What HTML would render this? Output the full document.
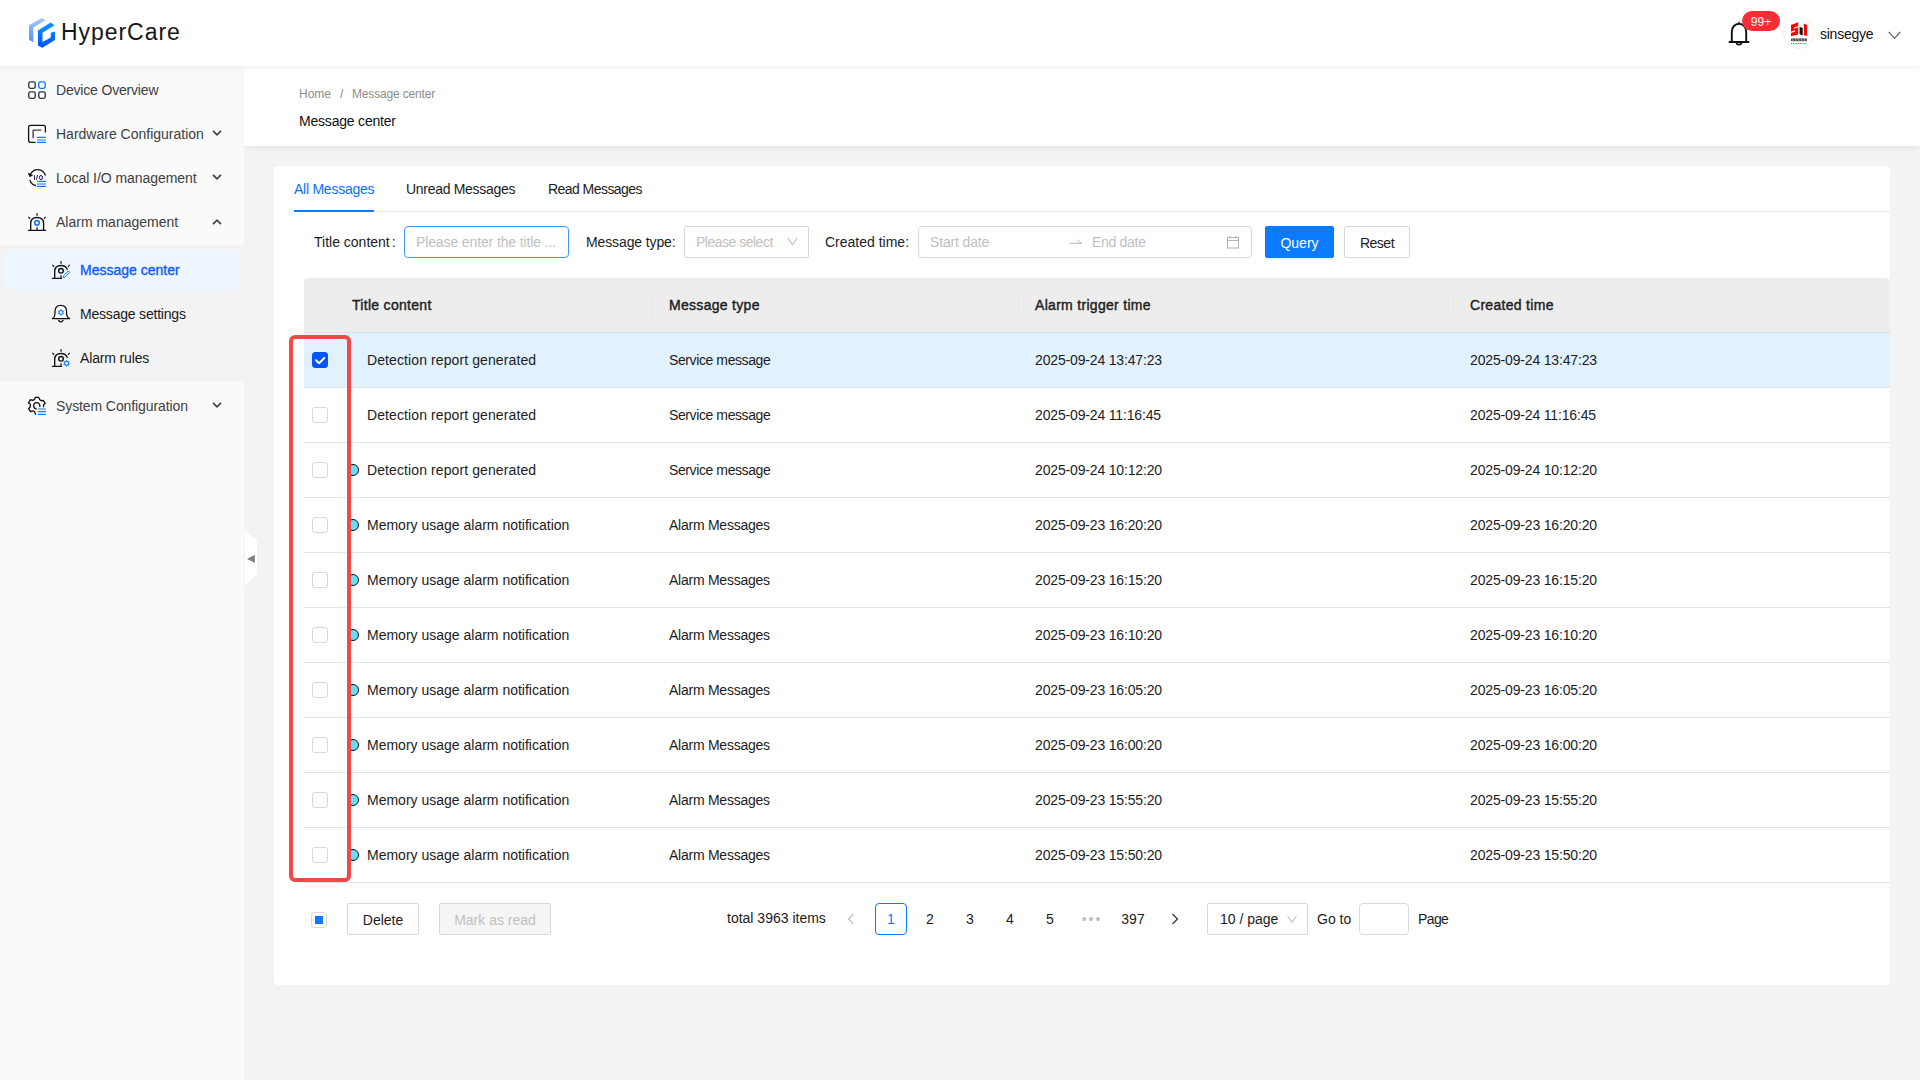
<!DOCTYPE html>
<html><head><meta charset="utf-8">
<style>
*{margin:0;padding:0;box-sizing:border-box}
html,body{width:1920px;height:1080px;overflow:hidden;background:#f3f3f3;font-family:"Liberation Sans",sans-serif;color:#1c1c1c}
.abs{position:absolute}
#header{position:absolute;left:0;top:0;width:1920px;height:66px;background:#fff;box-shadow:0 1px 7px rgba(0,0,0,.08);z-index:3}
#sidebar{position:absolute;left:0;top:66px;width:244px;height:1014px;background:#fafafa;z-index:1}
#crumb{position:absolute;left:244px;top:66px;width:1676px;height:80px;background:#fff;box-shadow:0 4px 6px -2px rgba(0,0,0,.06);z-index:2}
#card{position:absolute;left:274px;top:166px;width:1616px;height:819px;background:#fff;border-radius:4px}
.t{position:absolute;white-space:nowrap;font-size:14px;line-height:16px}
.menu{position:absolute;left:0;width:244px;height:44px}
.menu .t{left:56px;top:14px;color:#404040}
.chev{position:absolute;left:212px}

.inp{position:absolute;height:32px;border:1px solid #d9d9d9;border-radius:4px;background:#fff}
.ph{position:absolute;left:11px;top:7px;font-size:14px;line-height:16px;color:#bfbfbf;white-space:nowrap}
.btn{position:absolute;height:32px;border:1px solid #d9d9d9;border-radius:2px;background:#fff;font-size:14px;line-height:32px;text-align:center;color:#1c1c1c}
.btn.pri{background:#0a7aff;border-color:#0a7aff;color:#fff;box-shadow:0 2px 0 rgba(5,145,255,.1)}
.btn.dis{background:#f5f5f5;color:#bfbfbf}
#thead{position:absolute;left:30px;top:112px;width:1586px;height:55px;background:#ededed;border-radius:4px 4px 0 0;border-bottom:1px solid #dedede}
#thead .t{top:19px;font-weight:normal;-webkit-text-stroke:0.4px #1a1a1a;letter-spacing:0.3px}
.b{font-weight:bold;color:#1f1f1f}
.sep{position:absolute;top:16px;width:1px;height:22px;background:#e6e6e6}
#tbody{position:absolute;left:30px;top:167px;width:1586px}
.row{position:absolute;left:0;width:1586px;height:55px;border-bottom:1px solid #e3e3e3}
.row .t{top:19px}
.cb{position:absolute;top:19px;width:16px;height:16px;border:1px solid #d9d9d9;border-radius:3px;background:#fff}
.cb.on{background:#0055ff;border-color:#0055ff}
.cb.on svg{position:absolute;left:-1px;top:-1px}
.dot{position:absolute;left:43px;top:21px;width:12px;height:12px;border-radius:50%;background:#64e0ff;border:1px solid #111}
.pg{position:absolute;top:737px;width:32px;height:32px;font-size:14px;line-height:32px;text-align:center;color:#1c1c1c;border-radius:4px}
.pg.on{border:1px solid #0a7aff;color:#0a7aff;line-height:30px}
</style></head><body>
<div id="header">
  <svg class="abs" style="left:0;top:0" width="60" height="60" viewBox="0 0 60 60">
    <defs>
      <linearGradient id="g1" x1="0" y1="0" x2="0" y2="1"><stop offset="0" stop-color="#a6cbff"/><stop offset="1" stop-color="#4f8ffd"/></linearGradient>
      <linearGradient id="g2" x1="0" y1="0" x2="0" y2="1"><stop offset="0" stop-color="#0a9bff"/><stop offset="1" stop-color="#0050ff"/></linearGradient>
    </defs>
    <path d="M29 25.2 L41.7 17.9 L45.4 20.2 L33.3 27.5 L33.3 42 L29 40 Z" fill="url(#g1)"/>
    <path d="M37.9 30.4 L50.6 22.5 L54.6 25.2 L42.5 32.7 L42.5 41.9 L50.8 37.5 L50.8 32.7 L55 31.5 L55 40 L42.3 47.7 L37.9 45.4 Z" fill="url(#g2)"/>
  </svg>
  <div class="t" style="left:61px;top:18px;font-size:23px;line-height:28px;color:#161616;letter-spacing:0.95px">HyperCare</div>
  <svg class="abs" style="left:1726px;top:18px" width="26" height="30" viewBox="0 0 26 30">
    <path d="M13 3 L14 5.5 L12 5.5 Z" fill="#111"/>
    <path d="M5.8 23.5 V13.8 C5.8 9 9 5.8 13 5.8 C17 5.8 20.2 9 20.2 13.8 V23.5" stroke="#111" stroke-width="1.9" fill="none"/>
    <path d="M3.5 24 H22.5" stroke="#111" stroke-width="2" stroke-linecap="round"/>
    <path d="M10.5 24.5 C10.5 27.2 15.5 27.2 15.5 24.5" stroke="#111" stroke-width="1.7" fill="none"/>
  </svg>
  <div class="abs" style="left:1742px;top:11px;width:38px;height:20px;border-radius:10px;background:#ff2b35;color:#fff;font-size:12px;line-height:22px;text-align:center">99+</div>
  <div class="abs" style="left:1783px;top:17px;width:32px;height:32px;border-radius:50%;border:1px solid #f0f0f0;background:#fff"></div>
  <svg class="abs" style="left:1783px;top:17px" width="32" height="32" viewBox="0 0 32 32">
    <path d="M8 7.9 L15.2 5.2 L15.2 17.4 L8 19.3 Z" fill="#f00"/>
    <path d="M11.1 10.6 L15.4 9.1 L15.4 10.3 L11.1 11.8 Z M7.8 14.7 L12.2 13.2 L12.2 14.4 L7.8 15.9 Z" fill="#fff"/>
    <path d="M16.6 9.7 L19.7 11 L19.7 18.4 L16.6 17.3 Z" fill="#111"/>
    <path d="M20.8 6.6 L24.1 7.9 L24.1 19 L20.8 18.2 Z" fill="#f00"/>
    <rect x="8" y="21.4" width="16" height="2.8" fill="#555"/>
    <path d="M9.5 21.2 V24.4 M12.5 21.2 V24.4 M15.5 21.2 V24.4 M18.5 21.2 V24.4 M21.5 21.2 V24.4" stroke="#bbb" stroke-width="0.6"/>
    <path d="M8 26.5 H24.1" stroke="#f33" stroke-width="1.1" stroke-dasharray="1.1 1.2"/>
  </svg>
  <div class="t" style="left:1820px;top:26px;font-size:14px;color:#111;letter-spacing:-0.25px">sinsegye</div>
  <svg class="abs" style="left:1888px;top:31px" width="13" height="9" viewBox="0 0 13 9"><path d="M0.8 1 L6.5 7.4 L12.2 1" stroke="#666" stroke-width="1.2" fill="none"/></svg>
</div>

<div id="sidebar">
  <div class="menu" style="top:2px"><div class="t" style="letter-spacing:-0.18px">Device Overview</div></div>
  <div class="menu" style="top:46px"><div class="t">Hardware Configuration</div></div>
  <div class="menu" style="top:90px"><div class="t" style="letter-spacing:-0.05px">Local I/O management</div></div>
  <div class="menu" style="top:134px"><div class="t">Alarm management</div></div>
  <div class="abs" style="left:0;top:180px;width:244px;height:136px;background:#f3f3f3"></div>
  <div class="abs" style="left:4px;top:184px;width:236px;height:40px;background:#eef6ff;border-radius:8px"></div>
  <div class="menu" style="top:182px"><div class="t" style="left:80px;color:#0c5cff;-webkit-text-stroke:0.35px #0c5cff">Message center</div></div>
  <div class="menu" style="top:226px"><div class="t" style="left:80px;color:#1a1a1a;letter-spacing:-0.2px">Message settings</div></div>
  <div class="menu" style="top:270px"><div class="t" style="left:80px;color:#1a1a1a;letter-spacing:-0.15px">Alarm rules</div></div>
  <div class="menu" style="top:318px"><div class="t" style="letter-spacing:-0.1px">System Configuration</div></div>

  <svg class="abs" style="left:24px;top:10px" width="28" height="28" viewBox="0 0 28 28" fill="none" stroke-width="1.35">
    <rect x="4.75" y="5.9" width="6.5" height="6.5" rx="1.8" stroke="#333"/>
    <rect x="14.75" y="5.9" width="6.5" height="6.5" rx="1.8" stroke="#0a7aff"/>
    <rect x="4.75" y="15.9" width="6.5" height="6.5" rx="1.8" stroke="#333"/>
    <rect x="14.75" y="15.9" width="6.5" height="6.5" rx="1.8" stroke="#333"/>
  </svg>
  <svg class="abs" style="left:24px;top:54px" width="28" height="28" viewBox="0 0 28 28" fill="none">
    <path d="M11.1 22.3 H6.6 Q4.6 22.3 4.6 20.3 V7.4 Q4.6 5.4 6.6 5.4 H19.4 Q21.4 5.4 21.4 7.4 V11.9" stroke="#111" stroke-width="1.3" stroke-linecap="round"/>
    <path d="M9.1 17.6 V10.8 Q9.1 10.1 9.8 10.1 H16.9" stroke="#444" stroke-width="1.4" stroke-linecap="round"/>
    <path d="M13.5 17.4 H21.5 M13.5 20 H21.5 M13.5 22.4 H21.5" stroke="#0a7aff" stroke-width="1.2" stroke-linecap="round"/>
  </svg>
  <svg class="abs" style="left:24px;top:98px" width="28" height="28" viewBox="0 0 28 28" fill="none">
    <path d="M6.2 10.6 Q9 5.7 13.5 5.7 Q19 5.7 21.3 11.1" stroke="#111" stroke-width="1.3" stroke-linecap="round"/>
    <path d="M4.4 9.2 L5.6 12.6 L8.6 11.4 Z" fill="#111" stroke="#111" stroke-width="0.8" stroke-linejoin="round"/>
    <path d="M6 16.6 Q7.5 20.5 11.4 21.5" stroke="#111" stroke-width="1.3" stroke-linecap="round"/>
    <path d="M10.5 11.7 V15.5 M13.4 11.5 L12.5 15.5" stroke="#111" stroke-width="0.9" stroke-linecap="round"/>
    <ellipse cx="17" cy="13.5" rx="1.6" ry="2" stroke="#111" stroke-width="0.95"/>
    <path d="M13.5 17.4 H21.5 M13.5 20 H21.5 M13.5 22.4 H21.5" stroke="#0a7aff" stroke-width="1.2" stroke-linecap="round"/>
  </svg>
  <svg class="abs" style="left:24px;top:142px" width="28" height="28" viewBox="0 0 28 28" fill="none">
    <path d="M6.7 22 V15.5 Q6.7 9.5 13 9.5 Q19.6 9.5 19.6 15.5 V22" stroke="#111" stroke-width="1.35"/>
    <path d="M4.4 22.4 H21.6" stroke="#111" stroke-width="1.3" stroke-linecap="round"/>
    <path d="M13 5.6 V7.3 M4.7 9.2 L5.7 10.5 M21.3 9.2 L20.3 10.5 M13 19.6 V22" stroke="#111" stroke-width="1.2" stroke-linecap="round"/>
    <circle cx="13" cy="14.8" r="2.3" stroke="#0a7aff" stroke-width="1.6"/>
  </svg>
  <div class="abs" style="left:245px;top:464px;width:13px;height:56px;z-index:5">
    <svg width="13" height="56" viewBox="0 0 13 56"><path d="M0 0.4 L12 11 V44.4 L0 55.6 Z" fill="#fff"/><path d="M2.1 28.9 L9.9 24.8 V33 Z" fill="#808080"/></svg>
  </div>
  <svg class="abs" style="left:24px;top:326px" width="28" height="28" viewBox="0 0 28 28" fill="none">
    <path d="M11.5 22.2 L10.4 19.3 L8.3 18.8 L6.4 19.6 L4.6 16.4 L6.3 14.9 V12.2 L4.5 10.9 L6.5 7.7 L8.6 8.4 L10.6 7.4 L11.3 5.3 H14.6 L15.6 7.5 L17.2 8.6 L19.2 8.3 L21.2 11.4 L19.6 12.7 L19.6 14.6" stroke="#111" stroke-width="1.3" stroke-linejoin="round" stroke-linecap="round"/>
    <path d="M12.1 16.8 Q9.6 16.3 9.6 13.8 Q9.6 10.6 12.7 10.6 Q15.9 10.6 15.9 14.6" stroke="#111" stroke-width="1.3" stroke-linecap="round"/>
    <path d="M14.2 17 H21.5 M14.2 19.6 H21.5 M14.2 22.3 H21.5" stroke="#0a7aff" stroke-width="1.2" stroke-linecap="round"/>
  </svg>
  <svg class="abs" style="left:48px;top:190px" width="28" height="28" viewBox="0 0 28 28" fill="none">
    <path d="M6.7 22 V15.5 Q6.7 9.5 13 9.5 Q17.8 9.5 19.2 13.3" stroke="#111" stroke-width="1.35" stroke-linecap="round"/>
    <path d="M4.4 22.4 H13.6" stroke="#111" stroke-width="1.3" stroke-linecap="round"/>
    <path d="M13 5.6 V7.3 M4.7 9.2 L5.7 10.5 M21.3 9.2 L20.3 10.5 M13 19.6 V22" stroke="#111" stroke-width="1.2" stroke-linecap="round"/>
    <circle cx="13" cy="14.8" r="2.3" stroke="#111" stroke-width="1.4"/>
    <path d="M15.3 21.4 L15.5 19.7 L20 15.3 Q20.6 14.9 21.1 15.4 L21.4 15.8 Q21.8 16.4 21.3 16.9 L16.9 21.3 Z" stroke="#0a7aff" stroke-width="1" stroke-linejoin="round"/>
  </svg>
  <svg class="abs" style="left:48px;top:234px" width="28" height="28" viewBox="0 0 28 28" fill="none">
    <path d="M4.4 18.6 Q6.6 17.5 7 14 V11 Q7.5 5.4 12.7 5.4 Q18.3 5.4 18.5 11 V14 Q19 17.5 21.7 18.6 Z" fill="#fff" stroke="#111" stroke-width="1.3" stroke-linejoin="round"/>
    <path d="M10.6 20.3 Q12.8 23.6 15.1 20.3" stroke="#111" stroke-width="1.2" stroke-linecap="round"/>
    <path d="M13 9.35 L15.68 14.00 L10.32 14.00 Z M13 15.55 L15.68 10.90 L10.32 10.90 Z" fill="#0a7aff" stroke="#0a7aff" stroke-width="0.6" stroke-linejoin="round"/><circle cx="13" cy="12.45" r="1.1" fill="#fff"/>
  </svg>
  <svg class="abs" style="left:48px;top:278px" width="28" height="28" viewBox="0 0 28 28" fill="none">
    <path d="M6.7 22 V15.5 Q6.7 9.5 13 9.5 Q17.8 9.5 19.2 13.3" stroke="#111" stroke-width="1.35" stroke-linecap="round"/>
    <path d="M4.4 22.4 H13.6" stroke="#111" stroke-width="1.3" stroke-linecap="round"/>
    <path d="M13 5.6 V7.3 M4.7 9.2 L5.7 10.5 M21.3 9.2 L20.3 10.5 M13 19.6 V22" stroke="#111" stroke-width="1.2" stroke-linecap="round"/>
    <circle cx="13" cy="14.8" r="2.3" stroke="#111" stroke-width="1.4"/>
    <path d="M18.5 16.00 L21.36 20.95 L15.64 20.95 Z M18.5 22.60 L21.36 17.65 L15.64 17.65 Z" fill="#0a7aff" stroke="#0a7aff" stroke-width="0.6" stroke-linejoin="round"/><circle cx="18.5" cy="19.3" r="1.1" fill="#fff"/>
  </svg>

  <svg class="abs" style="left:211px;top:63px" width="12" height="8" viewBox="0 0 12 8"><path d="M2 1.8 L6 5.8 L10 1.8" stroke="#444" stroke-width="1.7" fill="none"/></svg>
  <svg class="abs" style="left:211px;top:107px" width="12" height="8" viewBox="0 0 12 8"><path d="M2 1.8 L6 5.8 L10 1.8" stroke="#444" stroke-width="1.7" fill="none"/></svg>
  <svg class="abs" style="left:211px;top:152px" width="12" height="8" viewBox="0 0 12 8"><path d="M2 6.2 L6 2.2 L10 6.2" stroke="#444" stroke-width="1.7" fill="none"/></svg>
  <svg class="abs" style="left:211px;top:335px" width="12" height="8" viewBox="0 0 12 8"><path d="M2 1.8 L6 5.8 L10 1.8" stroke="#444" stroke-width="1.7" fill="none"/></svg>
</div>

<div id="crumb">
  <div class="t" style="left:55px;top:20px;font-size:12px;color:#8c8c8c">Home</div><div class="t" style="left:96px;top:20px;font-size:12px;color:#8c8c8c">/</div><div class="t" style="left:108px;top:20px;font-size:12px;color:#8c8c8c;letter-spacing:-0.17px">Message center</div>
  <div class="t" style="left:55px;top:47px;font-size:14px;color:#111;letter-spacing:-0.2px">Message center</div>
</div>


<div id="card">
  <div class="t" style="left:20px;top:15px;color:#0870ff;letter-spacing:-0.25px">All Messages</div>
  <div class="t" style="left:132px;top:15px;letter-spacing:-0.3px">Unread Messages</div>
  <div class="t" style="left:274px;top:15px;letter-spacing:-0.55px">Read Messages</div>
  <div class="abs" style="left:20px;top:45px;width:1596px;height:1px;background:#ececec"></div>
  <div class="abs" style="left:20px;top:44px;width:80px;height:2px;background:#0a7aff"></div>

  <div class="t" style="left:40px;top:68px">Title content<span style="margin-left:2px">:</span></div>
  <div class="inp" style="left:130px;top:60px;width:165px;border-color:#3d9bff"><span class="ph" style="letter-spacing:-0.12px">Please enter the title ...</span></div>
  <div class="t" style="left:312px;top:68px;letter-spacing:-0.12px">Message type:</div>
  <div class="inp" style="left:410px;top:60px;width:125px;border-radius:2px"><span class="ph" style="letter-spacing:-0.5px">Please select</span>
    <svg class="abs" style="left:102px;top:10px" width="11" height="9" viewBox="0 0 11 9"><path d="M0.8 1.2 L5.5 7.5 L10.2 1.2" stroke="#bfbfbf" stroke-width="1.1" fill="none"/></svg></div>
  <div class="t" style="left:551px;top:68px">Created time:</div>
  <div class="inp" style="left:644px;top:60px;width:334px"><span class="ph" style="letter-spacing:-0.15px">Start date</span><span class="ph" style="left:173px;letter-spacing:-0.3px">End date</span>
    <svg class="abs" style="left:150px;top:11px" width="15" height="7" viewBox="0 0 15 7"><path d="M1 5.3 H12.8 M8.4 2 L12.8 5.3" stroke="#b3b3b3" stroke-width="1" fill="none"/></svg>
    <svg class="abs" style="left:308px;top:9px" width="13" height="13" viewBox="0 0 13 13"><rect x="0.5" y="1.5" width="11" height="10.5" stroke="#b3b3b3" stroke-width="1" fill="none"/><path d="M0.5 4.5 H11.5 M3 0 V2.5 M9 0 V2.5" stroke="#b3b3b3" stroke-width="1"/></svg>
  </div>
  <div class="btn pri" style="left:991px;top:60px;width:69px">Query</div>
  <div class="btn" style="left:1070px;top:60px;width:66px;letter-spacing:-0.5px">Reset</div>

  <div id="thead">
    <div class="t b" style="left:48px">Title content</div>
    <div class="sep" style="left:347px"></div>
    <div class="t b" style="left:365px">Message type</div>
    <div class="sep" style="left:714px"></div>
    <div class="t b" style="left:731px">Alarm trigger time</div>
    <div class="sep" style="left:1149px"></div>
    <div class="t b" style="left:1166px">Created time</div>
  </div>
  <div id="tbody">
<div class="row" style="top:0px;background:#e1f1fd;">
<div class="cb on" style="left:8px"><svg width="16" height="16" viewBox="0 0 16 16"><path d="M4 8.3 L7.1 11.3 L12.3 6" stroke="#fff" stroke-width="2" fill="none" stroke-linecap="round" stroke-linejoin="round"/></svg></div>
<div class="t" style="left:63px;letter-spacing:0.1px">Detection report generated</div>
<div class="t" style="left:365px;letter-spacing:-0.4px">Service message</div>
<div class="t" style="left:731px;letter-spacing:-0.16px">2025-09-24 13:47:23</div>
<div class="t" style="left:1166px;letter-spacing:-0.16px">2025-09-24 13:47:23</div>
</div>
<div class="row" style="top:55px;">
<div class="cb" style="left:8px"></div>
<div class="t" style="left:63px;letter-spacing:0.1px">Detection report generated</div>
<div class="t" style="left:365px;letter-spacing:-0.4px">Service message</div>
<div class="t" style="left:731px;letter-spacing:-0.16px">2025-09-24 11:16:45</div>
<div class="t" style="left:1166px;letter-spacing:-0.16px">2025-09-24 11:16:45</div>
</div>
<div class="row" style="top:110px;">
<div class="cb" style="left:8px"></div>
<div class="dot"></div>
<div class="t" style="left:63px;letter-spacing:0.1px">Detection report generated</div>
<div class="t" style="left:365px;letter-spacing:-0.4px">Service message</div>
<div class="t" style="left:731px;letter-spacing:-0.16px">2025-09-24 10:12:20</div>
<div class="t" style="left:1166px;letter-spacing:-0.16px">2025-09-24 10:12:20</div>
</div>
<div class="row" style="top:165px;">
<div class="cb" style="left:8px"></div>
<div class="dot"></div>
<div class="t" style="left:63px">Memory usage alarm notification</div>
<div class="t" style="left:365px;letter-spacing:-0.25px">Alarm Messages</div>
<div class="t" style="left:731px;letter-spacing:-0.16px">2025-09-23 16:20:20</div>
<div class="t" style="left:1166px;letter-spacing:-0.16px">2025-09-23 16:20:20</div>
</div>
<div class="row" style="top:220px;">
<div class="cb" style="left:8px"></div>
<div class="dot"></div>
<div class="t" style="left:63px">Memory usage alarm notification</div>
<div class="t" style="left:365px;letter-spacing:-0.25px">Alarm Messages</div>
<div class="t" style="left:731px;letter-spacing:-0.16px">2025-09-23 16:15:20</div>
<div class="t" style="left:1166px;letter-spacing:-0.16px">2025-09-23 16:15:20</div>
</div>
<div class="row" style="top:275px;">
<div class="cb" style="left:8px"></div>
<div class="dot"></div>
<div class="t" style="left:63px">Memory usage alarm notification</div>
<div class="t" style="left:365px;letter-spacing:-0.25px">Alarm Messages</div>
<div class="t" style="left:731px;letter-spacing:-0.16px">2025-09-23 16:10:20</div>
<div class="t" style="left:1166px;letter-spacing:-0.16px">2025-09-23 16:10:20</div>
</div>
<div class="row" style="top:330px;">
<div class="cb" style="left:8px"></div>
<div class="dot"></div>
<div class="t" style="left:63px">Memory usage alarm notification</div>
<div class="t" style="left:365px;letter-spacing:-0.25px">Alarm Messages</div>
<div class="t" style="left:731px;letter-spacing:-0.16px">2025-09-23 16:05:20</div>
<div class="t" style="left:1166px;letter-spacing:-0.16px">2025-09-23 16:05:20</div>
</div>
<div class="row" style="top:385px;">
<div class="cb" style="left:8px"></div>
<div class="dot"></div>
<div class="t" style="left:63px">Memory usage alarm notification</div>
<div class="t" style="left:365px;letter-spacing:-0.25px">Alarm Messages</div>
<div class="t" style="left:731px;letter-spacing:-0.16px">2025-09-23 16:00:20</div>
<div class="t" style="left:1166px;letter-spacing:-0.16px">2025-09-23 16:00:20</div>
</div>
<div class="row" style="top:440px;">
<div class="cb" style="left:8px"></div>
<div class="dot"></div>
<div class="t" style="left:63px">Memory usage alarm notification</div>
<div class="t" style="left:365px;letter-spacing:-0.25px">Alarm Messages</div>
<div class="t" style="left:731px;letter-spacing:-0.16px">2025-09-23 15:55:20</div>
<div class="t" style="left:1166px;letter-spacing:-0.16px">2025-09-23 15:55:20</div>
</div>
<div class="row" style="top:495px;">
<div class="cb" style="left:8px"></div>
<div class="dot"></div>
<div class="t" style="left:63px">Memory usage alarm notification</div>
<div class="t" style="left:365px;letter-spacing:-0.25px">Alarm Messages</div>
<div class="t" style="left:731px;letter-spacing:-0.16px">2025-09-23 15:50:20</div>
<div class="t" style="left:1166px;letter-spacing:-0.16px">2025-09-23 15:50:20</div>
</div>
  </div>
  <div class="abs" style="left:15px;top:169px;width:62px;height:547px;border:4px solid #f24848;border-radius:6px"></div>

  <div class="cb" style="left:37px;top:746px;width:16px;height:16px"><div class="abs" style="left:3px;top:3px;width:8px;height:8px;background:#0a7aff"></div></div>
  <div class="btn" style="left:73px;top:737px;width:72px">Delete</div>
  <div class="btn dis" style="left:165px;top:737px;width:112px">Mark as read</div>

  <div class="t" style="left:453px;top:744px">total 3963 items</div>
  <svg class="abs" style="left:573px;top:747px" width="8" height="12" viewBox="0 0 8 12"><path d="M6.5 1 L1.5 6 L6.5 11" stroke="#bfbfbf" stroke-width="1.2" fill="none"/></svg>
  <div class="pg on" style="left:601px">1</div>
  <div class="pg" style="left:640px">2</div>
  <div class="pg" style="left:680px">3</div>
  <div class="pg" style="left:720px">4</div>
  <div class="pg" style="left:760px">5</div>
  <div class="pg" style="left:802px;color:#bfbfbf;letter-spacing:2px">&bull;&bull;&bull;</div>
  <div class="pg" style="left:843px">397</div>
  <svg class="abs" style="left:897px;top:747px" width="8" height="12" viewBox="0 0 8 12"><path d="M1.5 1 L6.5 6 L1.5 11" stroke="#333" stroke-width="1.2" fill="none"/></svg>
  <div class="inp" style="left:933px;top:737px;width:101px;border-radius:2px"><span class="t" style="left:12px;top:7px">10 / page</span>
    <svg class="abs" style="left:79px;top:11px" width="10" height="9" viewBox="0 0 10 9"><path d="M0.6 1 L5 7.2 L9.4 1" stroke="#bfbfbf" stroke-width="1.1" fill="none"/></svg></div>
  <div class="t" style="left:1043px;top:745px">Go to</div>
  <div class="inp" style="left:1085px;top:737px;width:50px"></div>
  <div class="t" style="left:1144px;top:745px;letter-spacing:-0.6px">Page</div>
</div>
</body></html>
